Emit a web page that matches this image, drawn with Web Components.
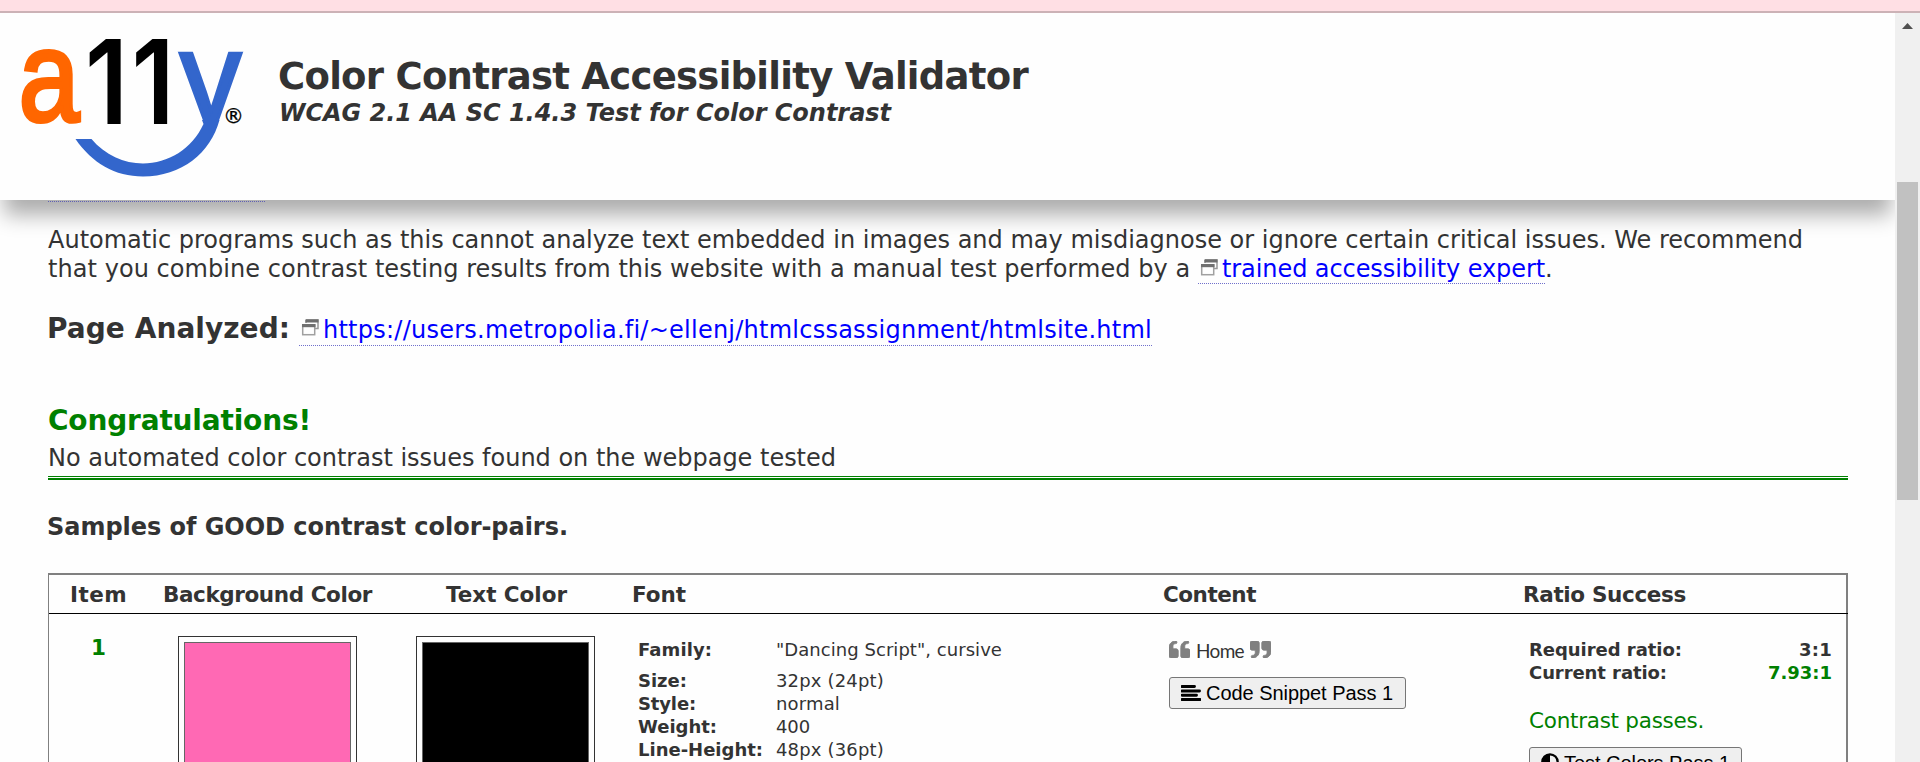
<!DOCTYPE html>
<html lang="en"><head><meta charset="utf-8"><title>Color Contrast Accessibility Validator</title>
<style>
html,body{margin:0;height:762px;overflow:hidden;background:#fefefe;font-family:"DejaVu Sans",sans-serif;color:#333}
</style></head><body><app-root></app-root>
<script>
const define=(name,html,after)=>customElements.define(name,class extends HTMLElement{
  constructor(){super();this.attachShadow({mode:'open'}).innerHTML=html}
  connectedCallback(){after&&after.call(this)}
});

/* Text run with a fixed measure: spacing is spread over its letters. */
define('fit-text','<style>:host{display:inline-block;white-space:pre;font-size:var(--s,24px);line-height:inherit}</style><slot></slot>',function(){
  this.style.setProperty('--s',(this.getAttribute('s')||24)+'px');
  const w=+this.getAttribute('w');
  if(!w)return;
  const n=this.textContent.length;
  const gap=(w-this.getBoundingClientRect().width)/n;
  this.style.letterSpacing=gap.toFixed(4)+'px';
});

define('window-icon',`<style>:host{display:block;width:24px;height:17px;margin-top:4px}svg{display:block}</style><svg width="24" height="17" viewBox="0 0 24 17"><path d="M7 1h12v8.500h-3M7 1v3" fill="none" stroke="#999" stroke-width="1.500"/><path d="M6.500.3h13v3.200h-13z" fill="#6e6e6e"/><rect x="3.700" y="6" width="12" height="9.700" fill="#fefefe" stroke="#a0a0a0" stroke-width="1.500"/><path d="M3 5h13.500v3.200H3z" fill="#707070"/></svg>`);

define('ext-link',`<style>:host{display:flex;height:29px;line-height:29px;color:#00f;border-bottom:1px dotted #7070cc;box-sizing:border-box}</style><window-icon></window-icon><slot></slot>`);

define('site-logo',`<style>:host{display:block;width:226px;height:150px}svg{display:block}</style>
<svg width="226" height="150" viewBox="20 30 226 150">
<defs><clipPath id="c"><rect x="170" y="51.700" width="90" height="69.300"/></clipPath></defs>
<g font-family="Liberation Sans, sans-serif">
<text transform="translate(18.800 121.400) scale(.845 1)" font-size="129" fill="#f60" stroke="#f60" stroke-width="4.200">a</text>
<g font-family="Inter, sans-serif" font-weight="600" font-size="117">
<text transform="translate(85 123.700) scale(.87 1)">1</text><text transform="translate(131.500 123.700) scale(.87 1)">1</text></g>
<g clip-path="url(#c)"><text transform="translate(179.300 123.500) scale(.92 1)" font-size="136" fill="#36c" stroke="#36c" stroke-width="3.400">y</text></g>
<text x="223" y="122.500" font-family="DejaVu Sans, sans-serif" font-size="21" stroke="#000" stroke-width=".3">®</text></g>
<path d="M75.500 139h16C105 155 124 163.500 143 163.500c25 0 49-14.500 60.500-39.500l-1.500-4h17.500c-9 33-38 56.500-76.500 56.500-28 0-51-13.500-67.500-37.500z" fill="#36c"/>
</svg>`);

define('page-header',`<style>
:host{display:block;height:187px;background:#fefefe;position:relative;z-index:2;box-shadow:0 19px 20px -4px rgba(0,0,0,.32)}
.row{display:flex;padding:17px 0 0 20px;gap:32px}
h1,p{margin:0;font-weight:700;line-height:40px}
.t{padding-top:27px}p{font-style:italic;line-height:30px;margin-top:0;padding-left:1px}
</style><div class="row"><site-logo></site-logo><div class="t"><h1><fit-text s="37" w="750">Color Contrast Accessibility Validator</fit-text></h1><p><fit-text s="24" w="612">WCAG 2.1 AA SC 1.4.3 Test for Color Contrast</fit-text></p></div></div>`);

define('scroll-bar',`<style>:host{display:block;width:25px;height:749px;background:#f0f0f0}
svg{display:block}.thumb{width:21px;height:318px;margin:0 0 0 2px;background:#c1c1c1}</style>
<svg width="25" height="169"><path d="M7 16h11l-5.500-6z" fill="#505050"/></svg><div class="thumb"></div>`);

define('color-swatch',`<style>:host{display:block;box-sizing:border-box;width:179px;height:179px;border:1px solid #333;padding:5px}
div{box-sizing:border-box;height:100%;border:1px solid #666;background:var(--c)}</style><div></div>`);

define('quote-mark',`<style>:host{display:inline-block;width:21px;height:17px}:host([end]) svg{transform:rotate(180deg)}svg{display:block}</style>
<svg width="21" height="17" viewBox="0 0 512 416" preserveAspectRatio="none"><path fill="#808080" stroke="#808080" stroke-width="22" d="M464 192h-80v-64c0-35 29-64 64-64h8c13 0 24-11 24-24V24c0-13-11-24-24-24h-8c-88 0-160 72-160 160v208c0 26 21 48 48 48h128c26 0 48-22 48-48V240c0-26-22-48-48-48zm-288 0H96v-64c0-35 29-64 64-64h8c13 0 24-11 24-24V24c0-13-11-24-24-24h-8C72 0 0 72 0 160v208c0 26 21 48 48 48h128c26 0 48-22 48-48V240c0-26-22-48-48-48z"/></svg>`);

define('action-button',`<style>:host{display:flex;box-sizing:border-box;height:32px;width:var(--w);border:1px solid #767676;border-radius:3px;background:#efefef;color:#000;font-family:"Liberation Sans",sans-serif;line-height:30px;padding-left:11px}
::slotted(svg){flex:none;margin:5px 5px 0 0}</style><slot></slot>`);

define('result-table',`<style>
:host{display:block;box-sizing:border-box;width:1800px;height:260px;border:solid gray;border-width:2px 2px 0 1px}
.g{display:grid;grid-template-columns:100px 252px 216px 531px 360px 1fr}
.head{height:38px;border-bottom:1px solid #000;font-weight:700;line-height:39px;margin-right:-2px}
.head>:nth-child(1){padding-left:21px}.head>:nth-child(2){padding-left:14px}.head>:nth-child(3){padding-left:45px}.head>:nth-child(4){padding-left:15px}.head>:nth-child(5){padding-left:15px}.head>:nth-child(6){padding-left:15px}
.body{line-height:23px;padding-top:22px}
.num{color:green;font-weight:700;padding-left:42px}
.sw1{padding-left:29px}.sw2{padding-left:15px}
dl{margin:2px 0 0 21px;display:grid;grid-template-columns:138px 1fr;grid-auto-rows:23px;grid-template-rows:31px}
dt{font-weight:700}dd{margin:0}
.content{padding:5px 0 0 21px}.q{display:flex;height:36px;align-items:flex-start}
.home{font-family:Lato,sans-serif;line-height:20px;margin:0 6px 0 6px}
.ratio{padding:2px 14px 0 21px;font-weight:700}.r{display:flex;justify-content:space-between}
.ok{color:green}.pass{font-weight:400;margin-top:25px;height:38px}
</style>
<div class="g head"><div><fit-text s="21.500" w="57">Item</fit-text></div><div><fit-text s="21.500" w="209">Background Color</fit-text></div><div><fit-text s="21.500" w="121">Text Color</fit-text></div><div><fit-text s="21.500" w="54">Font</fit-text></div><div><fit-text s="21.500" w="93">Content</fit-text></div><div><fit-text s="21.500" w="163">Ratio Success</fit-text></div></div>
<div class="g body"><div class="num"><fit-text s="21.500">1</fit-text></div>
<div class="sw1"><color-swatch style="--c:#ff69b4"></color-swatch></div>
<div class="sw2"><color-swatch style="--c:#000"></color-swatch></div>
<dl><dt><fit-text s="18" w="74">Family:</fit-text></dt><dd><fit-text s="18" w="226">"Dancing Script", cursive</fit-text></dd>
<dt><fit-text s="18" w="49">Size:</fit-text></dt><dd><fit-text s="18" w="108">32px (24pt)</fit-text></dd>
<dt><fit-text s="18" w="58">Style:</fit-text></dt><dd><fit-text s="18" w="64">normal</fit-text></dd>
<dt><fit-text s="18" w="79">Weight:</fit-text></dt><dd><fit-text s="18" w="34">400</fit-text></dd>
<dt><fit-text s="18" w="125">Line-Height:</fit-text></dt><dd><fit-text s="18" w="108">48px (36pt)</fit-text></dd></dl>
<div class="content"><div class="q"><quote-mark></quote-mark><fit-text class="home" s="19" w="48">Home</fit-text><quote-mark end></quote-mark></div>
<action-button style="--w:237px"><svg width="20" height="18"><path d="M1 3.500h12.500M1 8h17.500M1 12.200h14.500M1 16.500h18" stroke="#000" stroke-width="2.900" stroke-linecap="round"/></svg><fit-text s="20" w="187">Code Snippet Pass 1</fit-text></action-button></div>
<div class="ratio"><div class="r"><fit-text s="18" w="153">Required ratio:</fit-text><fit-text s="18" w="33">3:1</fit-text></div>
<div class="r"><fit-text s="18" w="138">Current ratio:</fit-text><fit-text class="ok" s="18" w="64">7.93:1</fit-text></div>
<div class="ok pass"><fit-text s="21.500" w="175">Contrast passes.</fit-text></div>
<action-button style="--w:213px;font-weight:400"><svg width="18" height="18"><circle cx="9" cy="9" r="7.700" fill="none" stroke="#000" stroke-width="2.300"/><path d="M9 1a8 8 0 0 1 0 16z" transform="rotate(180 9 9)"/></svg><fit-text s="20" w="166">Test Colors Pass 1</fit-text></action-button></div></div>`);

define('page-content',`<style>
:host{display:block;height:562px;padding:0 47px 0 48px;overflow:hidden}
.prev{width:217px;height:1px;border-bottom:1px dotted #88f}
p,h2,h3{margin:0}
.intro{line-height:29px;height:58px;padding-top:24px;white-space:nowrap}
.line{display:flex;height:29px;align-items:flex-start}
.page{display:flex;height:40px;margin-top:25px;gap:8px;line-height:39px}
.page ext-link{margin-top:6px;height:31px;line-height:30px}
.congrats{color:green;height:38px;margin-top:55px;line-height:34px}
.none{height:31px;line-height:32px}
.rule{border-top:1px solid green;border-bottom:2px solid green;height:1px;width:1800px;margin-top:3px}
h3{line-height:31px;height:30px;margin:32px 0 31px -1px}
</style><div class="prev"></div>
<p class="intro"><span class="line"><fit-text w="1755">Automatic programs such as this cannot analyze text embedded in images and may misdiagnose or ignore certain critical issues. We recommend</fit-text></span><span class="line"><fit-text w="1150">that you combine contrast testing results from this website with a manual test performed by a </fit-text><ext-link><fit-text w="323">trained accessibility expert</fit-text></ext-link><fit-text w="8">.</fit-text></span></p>
<div class="page"><h2 style="margin-left:-1px"><fit-text s="28" w="243">Page Analyzed:</fit-text></h2><ext-link style="margin-left:1px"><fit-text w="829">https://users.metropolia.fi/~ellenj/htmlcssassignment/htmlsite.html</fit-text></ext-link></div>
<h2 class="congrats"><fit-text s="28" w="263">Congratulations!</fit-text></h2>
<p class="none"><fit-text w="788">No automated color contrast issues found on the webpage tested</fit-text></p><div class="rule"></div>
<h3><fit-text w="521">Samples of GOOD contrast color-pairs.</fit-text></h3>
<result-table></result-table>`);

define('app-root',`<style>:host{display:block;width:1920px;height:762px;overflow:hidden}
.top{height:11px;background:#ffdfe4;border-bottom:2px solid #ccb2b6}
.view{display:flex}.doc{width:1895px;height:749px;overflow:hidden}</style>
<div class="top"></div><div class="view"><div class="doc"><page-header></page-header><page-content></page-content></div><scroll-bar></scroll-bar></div>`);
</script></body></html>
